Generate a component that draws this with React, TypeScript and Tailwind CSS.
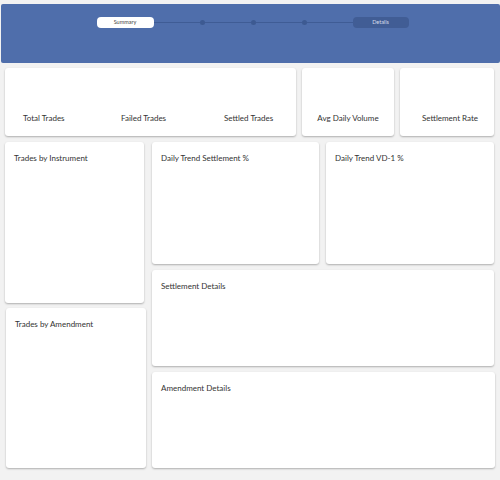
import type { ReactNode } from "react";

const font = { fontFamily: "Lato, 'Noto Sans', sans-serif" };

function Card({ className, children }: { className?: string; children?: ReactNode }) {
  return (
    <div className={`rounded-[3px] bg-white shadow-[0_1px_2px_rgba(0,0,0,0.28)] ${className ?? ""}`}>{children}</div>
  );
}

function Panel({ title, className }: { title: string; className?: string }) {
  return (
    <Card className={`px-[9px] pt-[10px] ${className ?? ""}`}>
      <div className="text-[8px] leading-[12px] text-[#333]">{title}</div>
    </Card>
  );
}

function Stepper() {
  const segment = <div className="h-px w-[46px] bg-[#3f5c95]" />;
  const dot = <div className="size-[5px] rounded-full bg-[#3d5a92]" />;
  return (
    <div className="flex items-center">
      <div className="flex h-[11px] w-[57px] items-center justify-center rounded-[4px] bg-white text-[5.5px] text-[#444]">
        Summary
      </div>
      {segment}
      {dot}
      {segment}
      {dot}
      {segment}
      {dot}
      {segment}
      <div className="flex h-[11px] w-[56px] items-center justify-center rounded-[4px] bg-[#415d95] text-[5.5px] text-[#d5dcea]">
        Details
      </div>
    </div>
  );
}

export default function App() {
  return (
    <div className="min-h-[480px] w-[500px] bg-[#f2f2f2] pt-[4px]" style={font}>
      <header className="ml-[1px] flex h-[59px] items-start justify-center rounded-[2px] bg-[#4f6eab] pl-[4px] pt-[13px]">
        <Stepper />
      </header>

      <div className="flex gap-[6px] pl-[5px] pt-[5px]">
        <Card className="flex h-[68px] w-[291px] items-end pb-[12px] text-[8px] text-[#333]">
          <div className="w-[98px] pl-[18px]">Total Trades</div>
          <div className="w-[103px] pl-[18px]">Failed Trades</div>
          <div className="pl-[18px]">Settled Trades</div>
        </Card>
        <Card className="flex h-[68px] w-[92px] items-end justify-center pb-[12px] text-[8px] text-[#333]">
          Avg Daily Volume
        </Card>
        <Card className="flex h-[68px] w-[94px] items-end justify-center pb-[12px] pl-[6px] text-[8px] text-[#333]">
          Settlement Rate
        </Card>
      </div>

      <div className="flex gap-[6px] pl-[5px] pt-[6px]">
        <div className="flex w-[141px] flex-col gap-[5px]">
          <Panel title="Trades by Instrument" className="h-[161px] w-[139px]" />
          <Panel title="Trades by Amendment" className="ml-px h-[160px] w-[140px]" />
        </div>
        <div className="flex w-[343px] flex-col gap-[6px]">
          <div className="flex gap-[7px]">
            <Panel title="Daily Trend Settlement %" className="h-[122px] w-[167px]" />
            <Panel title="Daily Trend VD-1 %" className="h-[122px] w-[168px]" />
          </div>
          <Panel title="Settlement Details" className="h-[96px] w-[342px]" />
          <Panel title="Amendment Details" className="h-[96px] w-[343px]" />
        </div>
      </div>
    </div>
  );
}
